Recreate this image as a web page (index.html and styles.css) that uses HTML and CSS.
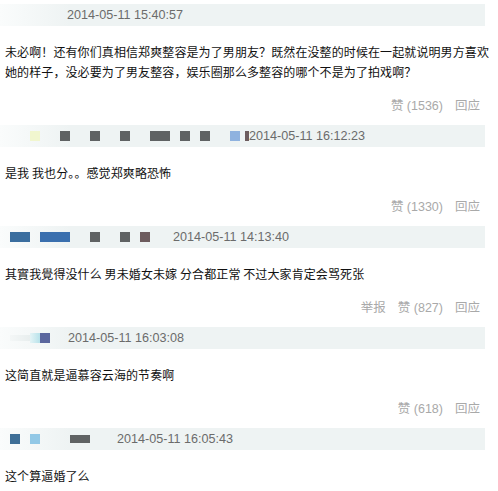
FILE: index.html
```html
<!DOCTYPE html>
<html lang="zh-CN">
<head>
    <meta charset="UTF-8">
    <title>评论</title>
    <link rel="stylesheet" href="styles.css">
</head>
<body>

<div class="comments">

    <div class="comment">
        <div class="comment-head pad-67">
            <span class="time">2014-05-11 15:40:57</span>
        </div>
        <p class="comment-text">未必啊！还有你们真相信郑爽整容是为了男朋友？既然在没整的时候在一起就说明男方喜欢<br>她的样子，没必要为了男友整容，娱乐圈那么多整容的哪个不是为了拍戏啊？</p>
        <div class="actions">
            <span>赞 (1536)</span>
            <span>回应</span>
        </div>
    </div>

    <div class="comment">
        <div class="comment-head pad-30">
            <span class="blk yellow"></span>
            <span class="blk gray ml-20"></span>
            <span class="blk gray ml-20"></span>
            <span class="blk gray ml-20"></span>
            <span class="blk gray w-20 ml-20"></span>
            <span class="blk gray ml-10"></span>
            <span class="blk gray ml-10"></span>
            <span class="blk sky ml-20"></span>
            <span class="blk brown w-4 ml-5"></span>
            <span class="time">2014-05-11 16:12:23</span>
        </div>
        <p class="comment-text">是我 我也分。。感觉郑爽略恐怖</p>
        <div class="actions">
            <span>赞 (1330)</span>
            <span>回应</span>
        </div>
    </div>

    <div class="comment">
        <div class="comment-head pad-10">
            <span class="blk blue w-20"></span>
            <span class="blk blue2 w-30 ml-10"></span>
            <span class="blk gray ml-20"></span>
            <span class="blk gray ml-20"></span>
            <span class="blk brown ml-10"></span>
            <span class="time ml-23">2014-05-11 14:13:40</span>
        </div>
        <p class="comment-text">其實我覺得没什么 男未婚女未嫁 分合都正常 不过大家肯定会骂死张</p>
        <div class="actions">
            <span>举报</span>
            <span>赞 (827)</span>
            <span>回应</span>
        </div>
    </div>

    <div class="comment">
        <div class="comment-head pad-10">
            <span class="blk faint w-20"></span>
            <span class="blk cyan"></span>
            <span class="blk indigo"></span>
            <span class="time ml-18">2014-05-11 16:03:08</span>
        </div>
        <p class="comment-text">这简直就是逼慕容云海的节奏啊</p>
        <div class="actions">
            <span>赞 (618)</span>
            <span>回应</span>
        </div>
    </div>

    <div class="comment">
        <div class="comment-head pad-10">
            <span class="blk steel"></span>
            <span class="blk light ml-10"></span>
            <span class="blk gray w-20 short ml-30"></span>
            <span class="time ml-27">2014-05-11 16:05:43</span>
        </div>
        <p class="comment-text">这个算逼婚了么</p>
    </div>

</div>

</body>
</html>
```

FILE: styles.css
```css
body {
    margin: 0;
    padding: 0;
    background-color: #fff;
    font-family: "Liberation Sans", "Noto Sans CJK SC", sans-serif;
}

.comments {
    width: 485px;
    padding-top: 4px;
}

.comment-head {
    display: flex;
    align-items: center;
    height: 22px;
    background: linear-gradient(to right, #fafcfc 0, #eef3f3 70px, #eef3f3 100%);
}

.pad-67 { padding-left: 67px; }
.pad-30 { padding-left: 30px; }
.pad-10 { padding-left: 10px; }

.time {
    font-size: 12.6px;
    color: #6b6b6b;
}

/* blurred user names */
.blk {
    display: inline-block;
    width: 10px;
    height: 10px;
    flex-shrink: 0;
}

.w-4 { width: 4px; }
.w-20 { width: 20px; }
.w-30 { width: 30px; }
.short { height: 8px; }

.ml-5 { margin-left: 5px; }
.ml-10 { margin-left: 10px; }
.ml-18 { margin-left: 18px; }
.ml-20 { margin-left: 20px; }
.ml-23 { margin-left: 23px; }
.ml-27 { margin-left: 27px; }
.ml-30 { margin-left: 30px; }

.yellow { background-color: #f1f6cf; }
.gray { background-color: #5f6263; }
.sky { background-color: #8fb2df; }
.brown { background-color: #6d5c5e; }
.blue { background-color: #3b6e9f; }
.blue2 { background-color: #3a6fae; }
.faint { background: linear-gradient(to right, #f4f7f7, #e8eeee); height: 6px; }
.cyan { background: linear-gradient(to right, #e4f4f6, #b7e2ea); }
.indigo { background-color: #5b679e; }
.steel { background-color: #3f6f97; }
.light { background-color: #92c8e6; }

.comment-text {
    margin: 0;
    padding: 16px 0 0 5px;
    font-family: "Noto Sans CJK SC", sans-serif;
    font-size: 12px;
    letter-spacing: 0.1px;
    line-height: 20px;
    white-space: nowrap;
    color: #111;
}

.actions {
    display: flex;
    justify-content: flex-end;
    gap: 12px;
    margin: 14px 5px 9px 0;
    font-size: 12.5px;
    line-height: 20px;
    color: #a9a9a9;
}
```
